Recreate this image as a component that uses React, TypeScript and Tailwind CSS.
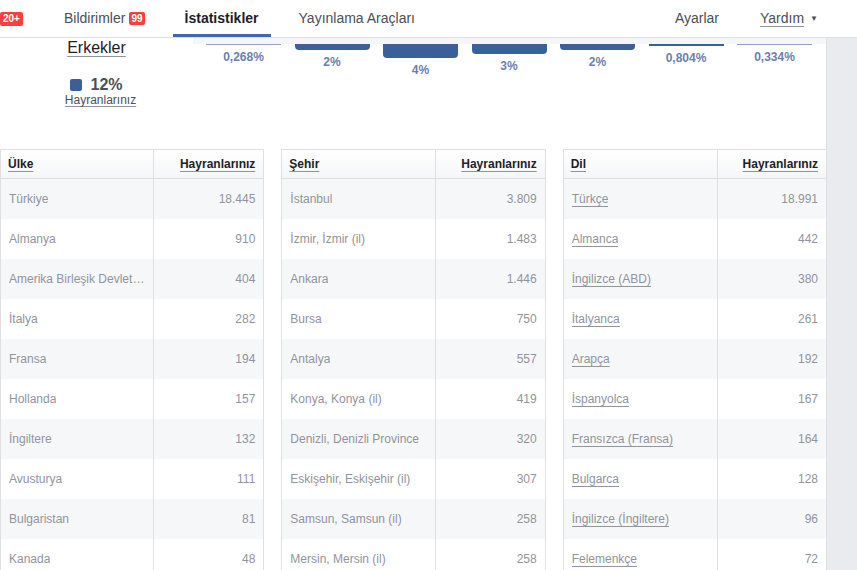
import React from "react";

const countries: [string, string][] = [
  ["Türkiye", "18.445"],
  ["Almanya", "910"],
  ["Amerika Birleşik Devletleri", "404"],
  ["İtalya", "282"],
  ["Fransa", "194"],
  ["Hollanda", "157"],
  ["İngiltere", "132"],
  ["Avusturya", "111"],
  ["Bulgaristan", "81"],
  ["Kanada", "48"],
];
const cities: [string, string][] = [
  ["İstanbul", "3.809"],
  ["İzmir, İzmir (il)", "1.483"],
  ["Ankara", "1.446"],
  ["Bursa", "750"],
  ["Antalya", "557"],
  ["Konya, Konya (il)", "419"],
  ["Denizli, Denizli Province", "320"],
  ["Eskişehir, Eskişehir (il)", "307"],
  ["Samsun, Samsun (il)", "258"],
  ["Mersin, Mersin (il)", "258"],
];
const langs: [string, string][] = [
  ["Türkçe", "18.991"],
  ["Almanca", "442"],
  ["İngilizce (ABD)", "380"],
  ["İtalyanca", "261"],
  ["Arapça", "192"],
  ["İspanyolca", "167"],
  ["Fransızca (Fransa)", "164"],
  ["Bulgarca", "128"],
  ["İngilizce (İngiltere)", "96"],
  ["Felemenkçe", "72"],
];

const bars: { label: string; h: number; light?: boolean }[] = [
  { label: "0,268%", h: 1, light: true },
  { label: "2%", h: 6 },
  { label: "4%", h: 14 },
  { label: "3%", h: 10 },
  { label: "2%", h: 6 },
  { label: "0,804%", h: 2 },
  { label: "0,334%", h: 1, light: true },
];

function Table({
  title,
  rows,
  firstW,
  link,
  last,
}: {
  title: string;
  rows: [string, string][];
  firstW: string;
  link?: boolean;
  last?: boolean;
}) {
  return (
    <div className={`flex-1 border-t border-[#dddfe2] ${last ? "border-l" : "border-l border-r"} border-[#dddfe2]`}>
      <div className="flex h-[29px] border-b border-[#dddfe2] bg-gradient-to-b from-white to-[#f5f6f7]">
        <div className={`${firstW} shrink-0 border-r border-[#dddfe2] flex items-center pl-[7px]`}>
          <span className="text-[12px] font-bold text-[#1d2129] underline decoration-[#8d949e] underline-offset-[3px]">
            {title}
          </span>
        </div>
        <div className="flex-1 flex items-center justify-end pr-[8px]">
          <span className="text-[12px] font-bold text-[#1d2129] underline decoration-[#8d949e] underline-offset-[3px]">
            Hayranlarınız
          </span>
        </div>
      </div>
      {rows.map(([name, val], i) => (
        <div
          key={name}
          className={`flex h-[40px] ${i % 2 === 0 ? "bg-[#f6f7f9]" : "bg-white"}`}
        >
          <div className={`${firstW} shrink-0 border-r border-[#dddfe2] flex items-center pl-[8px] pr-[8px] min-w-0`}>
            <span
              className={`text-[12px] text-[#90949c] truncate ${link ? "underline decoration-[#90949c] underline-offset-[3px]" : ""}`}
            >
              {name}
            </span>
          </div>
          <div className="flex-1 flex items-center justify-end pr-[8px] text-[12px] text-[#90949c]">
            {val}
          </div>
        </div>
      ))}
    </div>
  );
}

export default function App() {
  return (
    <div
      className="w-[857px] h-[570px] overflow-hidden bg-white"
      style={{ fontFamily: '"Liberation Sans", Arial, sans-serif' }}
    >
      {/* Nav */}
      <div className="h-[38px] flex items-stretch border-b border-[#dddfe2] bg-white text-[14px] text-[#4b4f56]">
        <div className="flex items-center">
          <span className="h-[14px] px-[3px] rounded-[2px] bg-[#fa3e3e] text-white text-[10px] font-bold leading-[14px] ml-0">
            20+
          </span>
        </div>
        <div className="flex items-center ml-[41px]">
          <span>Bildirimler</span>
          <span className="ml-[4px] h-[13px] px-[2px] rounded-[2px] bg-[#fa3e3e] text-white text-[10px] font-bold leading-[13px]">
            99
          </span>
        </div>
        <div className="ml-[28px] w-[98px] flex items-center justify-center border-b-[3px] border-[#4267b2] pt-[3px]">
          <span className="font-bold text-[#1d2129]">İstatistikler</span>
        </div>
        <div className="flex items-center ml-[28px]">Yayınlama Araçları</div>
        <div className="flex-1" />
        <div className="flex items-center">Ayarlar</div>
        <div className="flex items-center ml-[41px] mr-[39px]">
          <span className="underline decoration-[#8d949e] underline-offset-[3px]">Yardım</span>
          <span className="ml-[6px] text-[8px]">▼</span>
        </div>
      </div>

      <div className="flex h-[532px]">
        <div className="w-[826px] shrink-0 flex flex-col overflow-hidden">
          {/* Chart section */}
          <div className="h-[111px] shrink-0 flex">
            <div className="w-[193px] shrink-0 flex flex-col items-center">
              <span className="mt-[1px] text-[16px] text-[#1d2129] underline decoration-[#8d949e] underline-offset-[3px] leading-[18px]">
                Erkekler
              </span>
              <div className="mt-[19px] flex items-center h-[18px]">
                <span className="w-[12px] h-[12px] rounded-[2px] bg-[#3b5f99]" />
                <span className="ml-[8px] text-[16px] font-bold text-[#4b4f56] leading-[18px]">12%</span>
              </div>
              <span className="mt-[-1px] ml-[8px] text-[12px] leading-[14px] text-[#4b4f56] underline decoration-[#8d949e] underline-offset-[2px]">
                Hayranlarınız
              </span>
            </div>
            <div className="flex-1 flex flex-col">
              <div className="h-[6px] bg-[#f5f6f7]" />
              <div className="flex gap-[13.5px] pl-[13px]">
                {bars.map((b, i) => (
                  <div key={i} className="w-[75px] flex flex-col items-center">
                    <div
                      className={`w-full ${b.light ? "bg-[#91a4c7]" : "bg-[#3b5f99]"} ${b.h > 3 ? "rounded-b-[4px]" : ""}`}
                      style={{ height: b.h }}
                    />
                    <span className="mt-[5px] text-[12px] font-bold text-[#6a7fb0] leading-[14px]">
                      {b.label}
                    </span>
                  </div>
                ))}
              </div>
            </div>
          </div>
          {/* Tables */}
          <div className="flex shrink-0 gap-[17px]">
            <Table title="Ülke" rows={countries} firstW="w-[153px]" />
            <Table title="Şehir" rows={cities} firstW="w-[154px]" />
            <Table title="Dil" rows={langs} firstW="w-[154px]" link last />
          </div>
        </div>
        <div className="flex-1 bg-[#e9ebee] border-l border-[#dddfe2]" />
      </div>
    </div>
  );
}
